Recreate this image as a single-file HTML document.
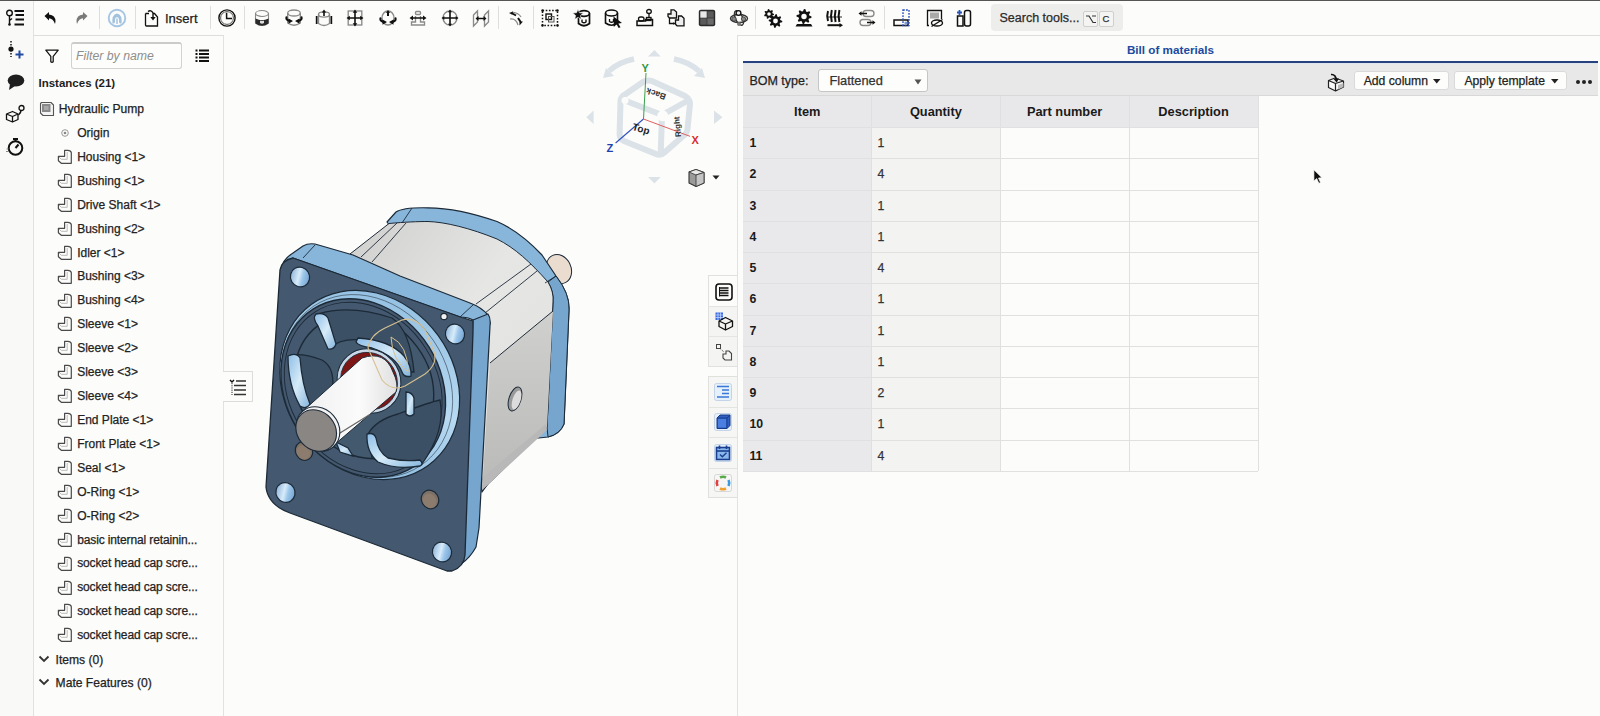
<!DOCTYPE html><html><head><meta charset="utf-8"><style>
*{box-sizing:border-box;margin:0;padding:0}
html,body{width:1600px;height:716px;overflow:hidden;background:#fcfcfa;font-family:"Liberation Sans",sans-serif;color:#222}
body{position:relative}
.a{position:absolute}
.t{position:absolute;white-space:nowrap}
.r{-webkit-text-stroke:0.25px currentColor}
svg{position:absolute;overflow:visible}
</style></head><body>
<div class="a" style="left:0;top:0;width:1600px;height:1px;background:#555553"></div>
<div class="a" style="left:0;top:1px;width:33px;height:715px;background:#f9f9f7"></div>
<div class="a" style="left:33px;top:1px;width:1px;height:715px;background:#e2e2e0"></div>
<div class="a" style="left:34px;top:35px;width:190px;height:1px;background:#dededc"></div>
<div class="a" style="left:737px;top:35px;width:863px;height:1px;background:#dededc"></div>
<div class="a" style="left:223px;top:36px;width:1px;height:680px;background:#e2e2e0"></div>
<div class="a" style="left:737px;top:36px;width:1px;height:680px;background:#e2e2e0"></div>
<div class="a" style="left:98.5px;top:6px;width:1px;height:23px;background:#dededc"></div>
<div class="a" style="left:134.5px;top:6px;width:1px;height:23px;background:#dededc"></div>
<div class="a" style="left:209.5px;top:6px;width:1px;height:23px;background:#dededc"></div>
<div class="a" style="left:243.5px;top:6px;width:1px;height:23px;background:#dededc"></div>
<div class="a" style="left:497.5px;top:6px;width:1px;height:23px;background:#dededc"></div>
<div class="a" style="left:532.5px;top:6px;width:1px;height:23px;background:#dededc"></div>
<div class="a" style="left:755.0px;top:6px;width:1px;height:23px;background:#dededc"></div>
<div class="a" style="left:883.5px;top:6px;width:1px;height:23px;background:#dededc"></div>
<div class="t r" style="left:165.00px;top:12.00px;font-size:13px;line-height:13px;color:#222;">Insert</div>
<div class="a" style="left:991px;top:4px;width:132px;height:27px;background:#ededeb;border-radius:4px"></div>
<div class="t r" style="left:999.50px;top:11.62px;font-size:12.5px;line-height:12.5px;color:#2a2a2a;">Search tools...</div>
<div class="a" style="left:1082.5px;top:10.5px;width:15px;height:16px;border:1px solid #cfcfcd;border-radius:2px;background:#f4f4f2"></div>
<div class="a" style="left:1098.5px;top:10.5px;width:15px;height:16px;border:1px solid #cfcfcd;border-radius:2px;background:#f4f4f2"></div>
<svg width="12" height="10" viewBox="0 0 12 10" style="left:1084.5px;top:13.5px"><path d="M1 2 L4 2 L8 8.5 L11 8.5 M7 2 L11 2" fill="none" stroke="#333" stroke-width="1.2"/></svg>
<div class="t r" style="left:1102.50px;top:14.26px;font-size:9.5px;line-height:9.5px;color:#333;">C</div>
<div class="a" style="left:70.5px;top:41.5px;width:111px;height:27px;border:1px solid #d2d2d0;border-top:2px solid #cbcbc9;border-radius:3px;background:#fdfdfb"></div>
<div class="t" style="left:76.00px;top:50.09px;font-size:12.3px;line-height:12.3px;font-weight:700;color:#8e8e8c;font-style:italic;font-weight:400;">Filter by name</div>
<div class="t" style="left:38.50px;top:77.57px;font-size:11.5px;line-height:11.5px;font-weight:700;color:#1e1e1e;">Instances (21)</div>
<div class="t r" style="left:58.70px;top:102.86px;font-size:12.1px;line-height:12.1px;color:#222;">Hydraulic Pump</div>
<div class="t r" style="left:77.20px;top:127.06px;font-size:12.1px;line-height:12.1px;color:#222;">Origin</div>
<svg width="16" height="16" style="left:57px;top:149.00px" viewBox="0 0 16 16"><path d="M1.4 7.3 L7.6 7.3 L7.6 1.4 L10.8 1.4 Q13.8 1.4 14.3 3.7 L14.3 14.3 L4.3 14.3 L1.4 11.7 Z" fill="none" stroke="#4a4a4a" stroke-width="1.2" stroke-linejoin="round"/><path d="M2 8 L4.3 10.3 L10.2 10.3 L10.2 3" fill="none" stroke="#aaa" stroke-width="0.8"/></svg>
<div class="t r" style="left:77.20px;top:150.84px;font-size:12.0px;line-height:12.0px;color:#222;">Housing &lt;1&gt;</div>
<svg width="16" height="16" style="left:57px;top:172.92px" viewBox="0 0 16 16"><path d="M1.4 7.3 L7.6 7.3 L7.6 1.4 L10.8 1.4 Q13.8 1.4 14.3 3.7 L14.3 14.3 L4.3 14.3 L1.4 11.7 Z" fill="none" stroke="#4a4a4a" stroke-width="1.2" stroke-linejoin="round"/><path d="M2 8 L4.3 10.3 L10.2 10.3 L10.2 3" fill="none" stroke="#aaa" stroke-width="0.8"/></svg>
<div class="t r" style="left:77.20px;top:174.76px;font-size:12.0px;line-height:12.0px;color:#222;">Bushing &lt;1&gt;</div>
<svg width="16" height="16" style="left:57px;top:196.84px" viewBox="0 0 16 16"><path d="M1.4 7.3 L7.6 7.3 L7.6 1.4 L10.8 1.4 Q13.8 1.4 14.3 3.7 L14.3 14.3 L4.3 14.3 L1.4 11.7 Z" fill="none" stroke="#4a4a4a" stroke-width="1.2" stroke-linejoin="round"/><path d="M2 8 L4.3 10.3 L10.2 10.3 L10.2 3" fill="none" stroke="#aaa" stroke-width="0.8"/></svg>
<div class="t r" style="left:77.20px;top:198.68px;font-size:12.0px;line-height:12.0px;color:#222;">Drive Shaft &lt;1&gt;</div>
<svg width="16" height="16" style="left:57px;top:220.76px" viewBox="0 0 16 16"><path d="M1.4 7.3 L7.6 7.3 L7.6 1.4 L10.8 1.4 Q13.8 1.4 14.3 3.7 L14.3 14.3 L4.3 14.3 L1.4 11.7 Z" fill="none" stroke="#4a4a4a" stroke-width="1.2" stroke-linejoin="round"/><path d="M2 8 L4.3 10.3 L10.2 10.3 L10.2 3" fill="none" stroke="#aaa" stroke-width="0.8"/></svg>
<div class="t r" style="left:77.20px;top:222.60px;font-size:12.0px;line-height:12.0px;color:#222;">Bushing &lt;2&gt;</div>
<svg width="16" height="16" style="left:57px;top:244.68px" viewBox="0 0 16 16"><path d="M1.4 7.3 L7.6 7.3 L7.6 1.4 L10.8 1.4 Q13.8 1.4 14.3 3.7 L14.3 14.3 L4.3 14.3 L1.4 11.7 Z" fill="none" stroke="#4a4a4a" stroke-width="1.2" stroke-linejoin="round"/><path d="M2 8 L4.3 10.3 L10.2 10.3 L10.2 3" fill="none" stroke="#aaa" stroke-width="0.8"/></svg>
<div class="t r" style="left:77.20px;top:246.52px;font-size:12.0px;line-height:12.0px;color:#222;">Idler &lt;1&gt;</div>
<svg width="16" height="16" style="left:57px;top:268.60px" viewBox="0 0 16 16"><path d="M1.4 7.3 L7.6 7.3 L7.6 1.4 L10.8 1.4 Q13.8 1.4 14.3 3.7 L14.3 14.3 L4.3 14.3 L1.4 11.7 Z" fill="none" stroke="#4a4a4a" stroke-width="1.2" stroke-linejoin="round"/><path d="M2 8 L4.3 10.3 L10.2 10.3 L10.2 3" fill="none" stroke="#aaa" stroke-width="0.8"/></svg>
<div class="t r" style="left:77.20px;top:270.44px;font-size:12.0px;line-height:12.0px;color:#222;">Bushing &lt;3&gt;</div>
<svg width="16" height="16" style="left:57px;top:292.52px" viewBox="0 0 16 16"><path d="M1.4 7.3 L7.6 7.3 L7.6 1.4 L10.8 1.4 Q13.8 1.4 14.3 3.7 L14.3 14.3 L4.3 14.3 L1.4 11.7 Z" fill="none" stroke="#4a4a4a" stroke-width="1.2" stroke-linejoin="round"/><path d="M2 8 L4.3 10.3 L10.2 10.3 L10.2 3" fill="none" stroke="#aaa" stroke-width="0.8"/></svg>
<div class="t r" style="left:77.20px;top:294.36px;font-size:12.0px;line-height:12.0px;color:#222;">Bushing &lt;4&gt;</div>
<svg width="16" height="16" style="left:57px;top:316.44px" viewBox="0 0 16 16"><path d="M1.4 7.3 L7.6 7.3 L7.6 1.4 L10.8 1.4 Q13.8 1.4 14.3 3.7 L14.3 14.3 L4.3 14.3 L1.4 11.7 Z" fill="none" stroke="#4a4a4a" stroke-width="1.2" stroke-linejoin="round"/><path d="M2 8 L4.3 10.3 L10.2 10.3 L10.2 3" fill="none" stroke="#aaa" stroke-width="0.8"/></svg>
<div class="t r" style="left:77.20px;top:318.28px;font-size:12.0px;line-height:12.0px;color:#222;">Sleeve &lt;1&gt;</div>
<svg width="16" height="16" style="left:57px;top:340.36px" viewBox="0 0 16 16"><path d="M1.4 7.3 L7.6 7.3 L7.6 1.4 L10.8 1.4 Q13.8 1.4 14.3 3.7 L14.3 14.3 L4.3 14.3 L1.4 11.7 Z" fill="none" stroke="#4a4a4a" stroke-width="1.2" stroke-linejoin="round"/><path d="M2 8 L4.3 10.3 L10.2 10.3 L10.2 3" fill="none" stroke="#aaa" stroke-width="0.8"/></svg>
<div class="t r" style="left:77.20px;top:342.20px;font-size:12.0px;line-height:12.0px;color:#222;">Sleeve &lt;2&gt;</div>
<svg width="16" height="16" style="left:57px;top:364.28px" viewBox="0 0 16 16"><path d="M1.4 7.3 L7.6 7.3 L7.6 1.4 L10.8 1.4 Q13.8 1.4 14.3 3.7 L14.3 14.3 L4.3 14.3 L1.4 11.7 Z" fill="none" stroke="#4a4a4a" stroke-width="1.2" stroke-linejoin="round"/><path d="M2 8 L4.3 10.3 L10.2 10.3 L10.2 3" fill="none" stroke="#aaa" stroke-width="0.8"/></svg>
<div class="t r" style="left:77.20px;top:366.12px;font-size:12.0px;line-height:12.0px;color:#222;">Sleeve &lt;3&gt;</div>
<svg width="16" height="16" style="left:57px;top:388.20px" viewBox="0 0 16 16"><path d="M1.4 7.3 L7.6 7.3 L7.6 1.4 L10.8 1.4 Q13.8 1.4 14.3 3.7 L14.3 14.3 L4.3 14.3 L1.4 11.7 Z" fill="none" stroke="#4a4a4a" stroke-width="1.2" stroke-linejoin="round"/><path d="M2 8 L4.3 10.3 L10.2 10.3 L10.2 3" fill="none" stroke="#aaa" stroke-width="0.8"/></svg>
<div class="t r" style="left:77.20px;top:390.04px;font-size:12.0px;line-height:12.0px;color:#222;">Sleeve &lt;4&gt;</div>
<svg width="16" height="16" style="left:57px;top:412.12px" viewBox="0 0 16 16"><path d="M1.4 7.3 L7.6 7.3 L7.6 1.4 L10.8 1.4 Q13.8 1.4 14.3 3.7 L14.3 14.3 L4.3 14.3 L1.4 11.7 Z" fill="none" stroke="#4a4a4a" stroke-width="1.2" stroke-linejoin="round"/><path d="M2 8 L4.3 10.3 L10.2 10.3 L10.2 3" fill="none" stroke="#aaa" stroke-width="0.8"/></svg>
<div class="t r" style="left:77.20px;top:413.96px;font-size:12.0px;line-height:12.0px;color:#222;">End Plate &lt;1&gt;</div>
<svg width="16" height="16" style="left:57px;top:436.04px" viewBox="0 0 16 16"><path d="M1.4 7.3 L7.6 7.3 L7.6 1.4 L10.8 1.4 Q13.8 1.4 14.3 3.7 L14.3 14.3 L4.3 14.3 L1.4 11.7 Z" fill="none" stroke="#4a4a4a" stroke-width="1.2" stroke-linejoin="round"/><path d="M2 8 L4.3 10.3 L10.2 10.3 L10.2 3" fill="none" stroke="#aaa" stroke-width="0.8"/></svg>
<div class="t r" style="left:77.20px;top:437.88px;font-size:12.0px;line-height:12.0px;color:#222;">Front Plate &lt;1&gt;</div>
<svg width="16" height="16" style="left:57px;top:459.96px" viewBox="0 0 16 16"><path d="M1.4 7.3 L7.6 7.3 L7.6 1.4 L10.8 1.4 Q13.8 1.4 14.3 3.7 L14.3 14.3 L4.3 14.3 L1.4 11.7 Z" fill="none" stroke="#4a4a4a" stroke-width="1.2" stroke-linejoin="round"/><path d="M2 8 L4.3 10.3 L10.2 10.3 L10.2 3" fill="none" stroke="#aaa" stroke-width="0.8"/></svg>
<div class="t r" style="left:77.20px;top:461.80px;font-size:12.0px;line-height:12.0px;color:#222;">Seal &lt;1&gt;</div>
<svg width="16" height="16" style="left:57px;top:483.88px" viewBox="0 0 16 16"><path d="M1.4 7.3 L7.6 7.3 L7.6 1.4 L10.8 1.4 Q13.8 1.4 14.3 3.7 L14.3 14.3 L4.3 14.3 L1.4 11.7 Z" fill="none" stroke="#4a4a4a" stroke-width="1.2" stroke-linejoin="round"/><path d="M2 8 L4.3 10.3 L10.2 10.3 L10.2 3" fill="none" stroke="#aaa" stroke-width="0.8"/></svg>
<div class="t r" style="left:77.20px;top:485.72px;font-size:12.0px;line-height:12.0px;color:#222;">O-Ring &lt;1&gt;</div>
<svg width="16" height="16" style="left:57px;top:507.80px" viewBox="0 0 16 16"><path d="M1.4 7.3 L7.6 7.3 L7.6 1.4 L10.8 1.4 Q13.8 1.4 14.3 3.7 L14.3 14.3 L4.3 14.3 L1.4 11.7 Z" fill="none" stroke="#4a4a4a" stroke-width="1.2" stroke-linejoin="round"/><path d="M2 8 L4.3 10.3 L10.2 10.3 L10.2 3" fill="none" stroke="#aaa" stroke-width="0.8"/></svg>
<div class="t r" style="left:77.20px;top:509.64px;font-size:12.0px;line-height:12.0px;color:#222;">O-Ring &lt;2&gt;</div>
<svg width="16" height="16" style="left:57px;top:531.72px" viewBox="0 0 16 16"><path d="M1.4 7.3 L7.6 7.3 L7.6 1.4 L10.8 1.4 Q13.8 1.4 14.3 3.7 L14.3 14.3 L4.3 14.3 L1.4 11.7 Z" fill="none" stroke="#4a4a4a" stroke-width="1.2" stroke-linejoin="round"/><path d="M2 8 L4.3 10.3 L10.2 10.3 L10.2 3" fill="none" stroke="#aaa" stroke-width="0.8"/></svg>
<div class="t r" style="left:77.20px;top:533.56px;font-size:12.0px;line-height:12.0px;color:#222;letter-spacing:-0.13px;">basic internal retainin...</div>
<svg width="16" height="16" style="left:57px;top:555.64px" viewBox="0 0 16 16"><path d="M1.4 7.3 L7.6 7.3 L7.6 1.4 L10.8 1.4 Q13.8 1.4 14.3 3.7 L14.3 14.3 L4.3 14.3 L1.4 11.7 Z" fill="none" stroke="#4a4a4a" stroke-width="1.2" stroke-linejoin="round"/><path d="M2 8 L4.3 10.3 L10.2 10.3 L10.2 3" fill="none" stroke="#aaa" stroke-width="0.8"/></svg>
<div class="t r" style="left:77.20px;top:557.48px;font-size:12.0px;line-height:12.0px;color:#222;letter-spacing:-0.13px;">socket head cap scre...</div>
<svg width="16" height="16" style="left:57px;top:579.56px" viewBox="0 0 16 16"><path d="M1.4 7.3 L7.6 7.3 L7.6 1.4 L10.8 1.4 Q13.8 1.4 14.3 3.7 L14.3 14.3 L4.3 14.3 L1.4 11.7 Z" fill="none" stroke="#4a4a4a" stroke-width="1.2" stroke-linejoin="round"/><path d="M2 8 L4.3 10.3 L10.2 10.3 L10.2 3" fill="none" stroke="#aaa" stroke-width="0.8"/></svg>
<div class="t r" style="left:77.20px;top:581.40px;font-size:12.0px;line-height:12.0px;color:#222;letter-spacing:-0.13px;">socket head cap scre...</div>
<svg width="16" height="16" style="left:57px;top:603.48px" viewBox="0 0 16 16"><path d="M1.4 7.3 L7.6 7.3 L7.6 1.4 L10.8 1.4 Q13.8 1.4 14.3 3.7 L14.3 14.3 L4.3 14.3 L1.4 11.7 Z" fill="none" stroke="#4a4a4a" stroke-width="1.2" stroke-linejoin="round"/><path d="M2 8 L4.3 10.3 L10.2 10.3 L10.2 3" fill="none" stroke="#aaa" stroke-width="0.8"/></svg>
<div class="t r" style="left:77.20px;top:605.32px;font-size:12.0px;line-height:12.0px;color:#222;letter-spacing:-0.13px;">socket head cap scre...</div>
<svg width="16" height="16" style="left:57px;top:627.40px" viewBox="0 0 16 16"><path d="M1.4 7.3 L7.6 7.3 L7.6 1.4 L10.8 1.4 Q13.8 1.4 14.3 3.7 L14.3 14.3 L4.3 14.3 L1.4 11.7 Z" fill="none" stroke="#4a4a4a" stroke-width="1.2" stroke-linejoin="round"/><path d="M2 8 L4.3 10.3 L10.2 10.3 L10.2 3" fill="none" stroke="#aaa" stroke-width="0.8"/></svg>
<div class="t r" style="left:77.20px;top:629.24px;font-size:12.0px;line-height:12.0px;color:#222;letter-spacing:-0.13px;">socket head cap scre...</div>
<div class="t r" style="left:55.60px;top:653.56px;font-size:12.1px;line-height:12.1px;color:#222;">Items (0)</div>
<div class="t r" style="left:55.60px;top:676.66px;font-size:12.1px;line-height:12.1px;color:#222;">Mate Features (0)</div>
<svg width="12" height="8" style="left:37.5px;top:655.3px" viewBox="0 0 12 8"><path d="M1.5 1.5 L6 6 L10.5 1.5" fill="none" stroke="#333" stroke-width="1.8"/></svg>
<svg width="12" height="8" style="left:37.5px;top:678.4px" viewBox="0 0 12 8"><path d="M1.5 1.5 L6 6 L10.5 1.5" fill="none" stroke="#333" stroke-width="1.8"/></svg>
<div class="t" style="left:1126.90px;top:43.90px;font-size:11.7px;line-height:11.7px;font-weight:700;color:#2049a0;">Bill of materials</div>
<div class="a" style="left:743px;top:61px;width:855px;height:2px;background:#26437f"></div>
<div class="a" style="left:743px;top:63px;width:855px;height:33px;background:#e8e8e9;border-top:1px solid #dfe5ef;border-bottom:1px solid #d8d8d8"></div>
<div class="t r" style="left:749.40px;top:75.02px;font-size:12.5px;line-height:12.5px;color:#222;">BOM type:</div>
<div class="a" style="left:817.5px;top:68.8px;width:110px;height:23px;border:1px solid #c6c6c6;border-radius:3px;background:#fdfdfb"></div>
<div class="t r" style="left:829.40px;top:74.76px;font-size:12.8px;line-height:12.8px;color:#333;">Flattened</div>
<svg width="8" height="6" style="left:914px;top:78.5px" viewBox="0 0 8 6"><path d="M0.5 0.5 L7.5 0.5 L4 5.5 Z" fill="#555"/></svg>
<div class="a" style="left:1354px;top:70.7px;width:95px;height:19.5px;border:1px solid #dadada;border-radius:3px;background:#fdfdfb"></div>
<div class="t r" style="left:1363.70px;top:74.67px;font-size:12.2px;line-height:12.2px;color:#222;">Add column</div>
<svg width="8" height="5" style="left:1433px;top:78.5px" viewBox="0 0 8 5"><path d="M0 0 L7.5 0 L3.75 4.5 Z" fill="#222"/></svg>
<div class="a" style="left:1454px;top:70.7px;width:113px;height:19.5px;border:1px solid #dadada;border-radius:3px;background:#fdfdfb"></div>
<div class="t r" style="left:1464.40px;top:74.67px;font-size:12.2px;line-height:12.2px;color:#222;">Apply template</div>
<svg width="8" height="5" style="left:1551px;top:78.5px" viewBox="0 0 8 5"><path d="M0 0 L7.5 0 L3.75 4.5 Z" fill="#222"/></svg>
<div class="a" style="left:1575.5px;top:80px;width:4px;height:4px;border-radius:2px;background:#222"></div>
<div class="a" style="left:1581.5px;top:80px;width:4px;height:4px;border-radius:2px;background:#222"></div>
<div class="a" style="left:1587.5px;top:80px;width:4px;height:4px;border-radius:2px;background:#222"></div>
<svg width="20" height="20" viewBox="0 0 20 20" style="left:1326px;top:72px"><path d="M2.5 8.5 L9 6 L17.5 9 L17.5 15 L9.5 19 L2.5 15.5 Z M2.5 8.5 L9.5 11.5 L17.5 9 M9.5 11.5 L9.5 19" fill="#fafafa" stroke="#222" stroke-width="1.2" stroke-linejoin="round"/><path d="M12 13 L17.5 11 L17.5 15 L12 17.5 Z" fill="#bbb"/><path d="M5 2.5 Q9.5 2 10.5 8" fill="none" stroke="#111" stroke-width="1.6"/><path d="M7.5 7 L10.7 10.5 L13 6.5 Z" fill="#111"/></svg>
<div class="a" style="left:743px;top:96.25px;width:515px;height:31.25px;background:#e8e8ea"></div>
<div class="a" style="left:743px;top:127.5px;width:128.5px;height:343.75px;background:#e9e9eb"></div>
<div class="a" style="left:871.5px;top:127.5px;width:128.7px;height:343.75px;background:#f3f3f2"></div>
<div class="a" style="left:1000.5px;top:127.5px;width:257.5px;height:343.75px;background:#fcfcfa"></div>
<div class="a" style="left:743px;top:127.00px;width:515px;height:1px;background:#e0e0e0"></div>
<div class="a" style="left:743px;top:158.25px;width:515px;height:1px;background:#e0e0e0"></div>
<div class="a" style="left:743px;top:189.50px;width:515px;height:1px;background:#e0e0e0"></div>
<div class="a" style="left:743px;top:220.75px;width:515px;height:1px;background:#e0e0e0"></div>
<div class="a" style="left:743px;top:252.00px;width:515px;height:1px;background:#e0e0e0"></div>
<div class="a" style="left:743px;top:283.25px;width:515px;height:1px;background:#e0e0e0"></div>
<div class="a" style="left:743px;top:314.50px;width:515px;height:1px;background:#e0e0e0"></div>
<div class="a" style="left:743px;top:345.75px;width:515px;height:1px;background:#e0e0e0"></div>
<div class="a" style="left:743px;top:377.00px;width:515px;height:1px;background:#e0e0e0"></div>
<div class="a" style="left:743px;top:408.25px;width:515px;height:1px;background:#e0e0e0"></div>
<div class="a" style="left:743px;top:439.50px;width:515px;height:1px;background:#e0e0e0"></div>
<div class="a" style="left:743px;top:470.75px;width:515px;height:1px;background:#e0e0e0"></div>
<div class="a" style="left:871.00px;top:96.25px;width:1px;height:375px;background:#e0e0e0"></div>
<div class="a" style="left:999.70px;top:96.25px;width:1px;height:375px;background:#e0e0e0"></div>
<div class="a" style="left:1128.50px;top:96.25px;width:1px;height:375px;background:#e0e0e0"></div>
<div class="a" style="left:1257.50px;top:96.25px;width:1px;height:375px;background:#e0e0e0"></div>
<div class="t" style="left:743px;width:128.5px;text-align:center;top:105.76px;font-size:12.8px;line-height:12.8px;font-weight:700;color:#1a1a1a">Item</div>
<div class="t" style="left:871.5px;width:128.70000000000005px;text-align:center;top:105.76px;font-size:12.8px;line-height:12.8px;font-weight:700;color:#1a1a1a">Quantity</div>
<div class="t" style="left:1000.2px;width:128.79999999999995px;text-align:center;top:105.76px;font-size:12.8px;line-height:12.8px;font-weight:700;color:#1a1a1a">Part number</div>
<div class="t" style="left:1129px;width:129px;text-align:center;top:105.76px;font-size:12.8px;line-height:12.8px;font-weight:700;color:#1a1a1a">Description</div>
<div class="t" style="left:749.40px;top:137.09px;font-size:12.3px;line-height:12.3px;font-weight:700;color:#1a1a1a;">1</div>
<div class="t r" style="left:877.50px;top:137.09px;font-size:12.3px;line-height:12.3px;color:#333;">1</div>
<div class="t" style="left:749.40px;top:168.34px;font-size:12.3px;line-height:12.3px;font-weight:700;color:#1a1a1a;">2</div>
<div class="t r" style="left:877.50px;top:168.34px;font-size:12.3px;line-height:12.3px;color:#333;">4</div>
<div class="t" style="left:749.40px;top:199.59px;font-size:12.3px;line-height:12.3px;font-weight:700;color:#1a1a1a;">3</div>
<div class="t r" style="left:877.50px;top:199.59px;font-size:12.3px;line-height:12.3px;color:#333;">1</div>
<div class="t" style="left:749.40px;top:230.84px;font-size:12.3px;line-height:12.3px;font-weight:700;color:#1a1a1a;">4</div>
<div class="t r" style="left:877.50px;top:230.84px;font-size:12.3px;line-height:12.3px;color:#333;">1</div>
<div class="t" style="left:749.40px;top:262.09px;font-size:12.3px;line-height:12.3px;font-weight:700;color:#1a1a1a;">5</div>
<div class="t r" style="left:877.50px;top:262.09px;font-size:12.3px;line-height:12.3px;color:#333;">4</div>
<div class="t" style="left:749.40px;top:293.34px;font-size:12.3px;line-height:12.3px;font-weight:700;color:#1a1a1a;">6</div>
<div class="t r" style="left:877.50px;top:293.34px;font-size:12.3px;line-height:12.3px;color:#333;">1</div>
<div class="t" style="left:749.40px;top:324.59px;font-size:12.3px;line-height:12.3px;font-weight:700;color:#1a1a1a;">7</div>
<div class="t r" style="left:877.50px;top:324.59px;font-size:12.3px;line-height:12.3px;color:#333;">1</div>
<div class="t" style="left:749.40px;top:355.84px;font-size:12.3px;line-height:12.3px;font-weight:700;color:#1a1a1a;">8</div>
<div class="t r" style="left:877.50px;top:355.84px;font-size:12.3px;line-height:12.3px;color:#333;">1</div>
<div class="t" style="left:749.40px;top:387.09px;font-size:12.3px;line-height:12.3px;font-weight:700;color:#1a1a1a;">9</div>
<div class="t r" style="left:877.50px;top:387.09px;font-size:12.3px;line-height:12.3px;color:#333;">2</div>
<div class="t" style="left:749.40px;top:418.34px;font-size:12.3px;line-height:12.3px;font-weight:700;color:#1a1a1a;">10</div>
<div class="t r" style="left:877.50px;top:418.34px;font-size:12.3px;line-height:12.3px;color:#333;">1</div>
<div class="t" style="left:749.40px;top:449.59px;font-size:12.3px;line-height:12.3px;font-weight:700;color:#1a1a1a;">11</div>
<div class="t r" style="left:877.50px;top:449.59px;font-size:12.3px;line-height:12.3px;color:#333;">4</div>
<svg width="20" height="20" viewBox="0 0 20 20" style="left:40.00px;top:7.50px"><path d="M4.5 8 L9 4 L9 6.5 Q15.5 7 15.5 13.5 L15 16 Q13 10.5 9 10.3 L9 12.5 Z" fill="#111"/></svg>
<svg width="20" height="20" viewBox="0 0 20 20" style="left:72.00px;top:7.50px"><path d="M15.5 8 L11 4 L11 6.5 Q4.5 7 4.5 13.5 L5 16 Q7 10.5 11 10.3 L11 12.5 Z" fill="#7a7a7a"/></svg>
<svg width="20" height="20" viewBox="0 0 20 20" style="left:107.00px;top:7.50px"><circle cx="10" cy="10" r="8.3" fill="none" stroke="#a6c6e4" stroke-width="1.9"/><path d="M5.5 15.5 Q4.5 6.5 10 5.5 Q15.5 6.5 14.5 15.5 Q12.5 16 12 14 Q12.5 9.5 10 9.3 Q7.5 9.5 8 14 Q7.5 16 5.5 15.5 Z" fill="#a3c2e0"/><path d="M9 10.5 L11 10.5 L11 16 L9 16 Z" fill="#b8d2ea"/></svg>
<svg width="20" height="20" viewBox="0 0 20 20" style="left:142.40px;top:7.50px"><path d="M3.5 5.5 L7 5.5 M3.5 5.5 L3.5 17 Q3.5 18 4.5 18 L15.5 18 L15.5 9 L12.5 5.5 L11 5.5" fill="none" stroke="#111" stroke-width="1.3"/><path d="M6 3.5 Q9 1.5 11 5 L11 10" fill="none" stroke="#111" stroke-width="1.4"/><path d="M8.3 9 L13.7 9 L11 12.5 Z" fill="#111"/></svg>
<svg width="20" height="20" viewBox="0 0 20 20" style="left:217.40px;top:7.50px"><circle cx="10" cy="10" r="8.1" fill="none" stroke="#111" stroke-width="1.4"/><circle cx="10" cy="10" r="6.4" fill="none" stroke="#444" stroke-width="0.9"/><path d="M9.6 4.8 L9.6 10.6 L15 10.6" fill="none" stroke="#111" stroke-width="1.5"/></svg>
<svg width="20" height="20" viewBox="0 0 20 20" style="left:251.50px;top:7.50px"><ellipse cx="10" cy="5.5" rx="6.5" ry="3" fill="none" stroke="#888" stroke-width="1.1"/><path d="M3.5 5.5 L3.5 15 Q10 20 16.5 15 L16.5 5.5" fill="none" stroke="#888" stroke-width="1.1"/><path d="M3.5 10.5 Q10 14 16.5 10.5 L16.5 15.5 Q10 20 3.5 15.5 Z" fill="#2a2a2a"/><path d="M8 12.5 L8 15 Q10 16.5 12 15 L12 12.5 Q10 13.5 8 12.5 Z" fill="#ddd"/></svg>
<svg width="20" height="20" viewBox="0 0 20 20" style="left:283.90px;top:7.50px"><ellipse cx="10" cy="5" rx="6.3" ry="3" fill="none" stroke="#8a8a8a" stroke-width="1.35"/><path d="M3.7 5 L3.7 15 Q10 19.5 16.3 15 L16.3 5" fill="none" stroke="#8a8a8a" stroke-width="1.35"/><path d="M5.5 13 Q1 11.5 2.8 8.5 M14.5 13 Q19 11.5 17.2 8.5" fill="none" stroke="#111" stroke-width="2"/><path d="M4.5 10.5 L9 13 L4.5 15.8 Z M15.5 10.5 L11 13 L15.5 15.8 Z" fill="#111"/></svg>
<svg width="20" height="20" viewBox="0 0 20 20" style="left:314.40px;top:7.50px"><ellipse cx="10" cy="6.5" rx="5.5" ry="2.6" fill="none" stroke="#8a8a8a" stroke-width="1.35"/><path d="M4.5 6.5 L4.5 15.5 Q10 19.5 15.5 15.5 L15.5 6.5" fill="none" stroke="#8a8a8a" stroke-width="1.35"/><path d="M10 1.5 L12.2 4.5 L10.8 4.5 L10.8 8 L9.2 8 L9.2 4.5 L7.8 4.5 Z" fill="#111"/><rect x="1.8" y="8" width="1.7" height="8" fill="#111"/><rect x="16.5" y="8" width="1.7" height="8" fill="#111"/></svg>
<svg width="20" height="20" viewBox="0 0 20 20" style="left:345.40px;top:7.50px"><rect x="3.2" y="3" width="13.6" height="14" fill="none" stroke="#8a8a8a" stroke-width="1.35"/><path d="M10 1.5 L12.3 4.8 L10.8 4.8 L10.8 9.2 L15.2 9.2 L15.2 7.7 L18.5 10 L15.2 12.3 L15.2 10.8 L10.8 10.8 L10.8 15.2 L12.3 15.2 L10 18.5 L7.7 15.2 L9.2 15.2 L9.2 10.8 L4.8 10.8 L4.8 12.3 L1.5 10 L4.8 7.7 L4.8 9.2 L9.2 9.2 L9.2 4.8 L7.7 4.8 Z" fill="#111"/></svg>
<svg width="20" height="20" viewBox="0 0 20 20" style="left:377.50px;top:7.50px"><ellipse cx="10" cy="10" rx="6" ry="7" fill="none" stroke="#8a8a8a" stroke-width="1.35"/><path d="M10 2 L12 5 L8 5 Z" fill="#111"/><path d="M10 5 L10 8" stroke="#111" stroke-width="2"/><path d="M5.5 14 Q1 12.5 2.8 9.5 M14.5 14 Q19 12.5 17.2 9.5" fill="none" stroke="#111" stroke-width="2"/><path d="M4.5 11.5 L9 14 L4.5 16.8 Z M15.5 11.5 L11 14 L15.5 16.8 Z" fill="#111"/></svg>
<svg width="20" height="20" viewBox="0 0 20 20" style="left:408.00px;top:7.50px"><rect x="7.5" y="3.5" width="5" height="3" rx="1" fill="none" stroke="#8a8a8a" stroke-width="1.35"/><path d="M7.5 8 L7.5 14 L3.5 14 L3.5 17 L16.5 17 L16.5 14 L12.5 14 L12.5 8" fill="none" stroke="#8a8a8a" stroke-width="1.35"/><path d="M1.5 10 L5 7.5 L5 9.2 L15 9.2 L15 7.5 L18.5 10 L15 12.5 L15 10.8 L5 10.8 L5 12.5 Z" fill="#111"/></svg>
<svg width="20" height="20" viewBox="0 0 20 20" style="left:439.70px;top:7.50px"><circle cx="10" cy="10" r="7" fill="none" stroke="#8a8a8a" stroke-width="1.35"/><path d="M10 1.5 L12 4.3 L10.8 4.3 L10.8 9.2 L15.7 9.2 L15.7 8 L18.5 10 L15.7 12 L15.7 10.8 L10.8 10.8 L10.8 15.7 L12 15.7 L10 18.5 L8 15.7 L9.2 15.7 L9.2 10.8 L4.3 10.8 L4.3 12 L1.5 10 L4.3 8 L4.3 9.2 L9.2 9.2 L9.2 4.3 L8 4.3 Z" fill="#111"/></svg>
<svg width="20" height="20" viewBox="0 0 20 20" style="left:471.00px;top:7.50px"><path d="M2.5 7 L6.5 3 L6.5 14 L2.5 18 Z M13.5 7 L17.5 3 L17.5 14 L13.5 18 Z" fill="none" stroke="#8a8a8a" stroke-width="1.35"/><path d="M4.5 10.5 L7.5 8 L7.5 9.8 L12.5 9.8 L12.5 8 L15.5 10.5 L12.5 13 L12.5 11.2 L7.5 11.2 L7.5 13 Z" fill="#111"/></svg>
<svg width="20" height="20" viewBox="0 0 20 20" style="left:506.00px;top:7.50px"><path d="M6 4 Q13 5 15 9 M4 11 Q10 10 12 17" fill="none" stroke="#8a8a8a" stroke-width="1.2"/><path d="M3 5 L7 3.5 L6.3 6.8 Z" fill="#111"/><path d="M5.5 5 L10 7.5" stroke="#111" stroke-width="2"/><path d="M12 10 L15 14.5" stroke="#111" stroke-width="2"/><path d="M13.5 17.5 L17 13.5 L13.5 14 Z" fill="#111"/></svg>
<svg width="20" height="20" viewBox="0 0 20 20" style="left:540.20px;top:7.50px"><path d="M2.5 2.5 L17.5 2.5 L17.5 17.5 L2.5 17.5 Z" fill="none" stroke="#111" stroke-width="1.5" stroke-dasharray="1.6 1.6"/><circle cx="2.5" cy="2.5" r="1.2" fill="#111"/><circle cx="17.5" cy="2.5" r="1.2" fill="#111"/><circle cx="2.5" cy="17.5" r="1.2" fill="#111"/><circle cx="17.5" cy="17.5" r="1.2" fill="#111"/><rect x="6" y="6" width="5.5" height="5.5" fill="none" stroke="#111" stroke-width="1.4"/><rect x="8.5" y="8.5" width="5.5" height="5.5" fill="none" stroke="#555" stroke-width="1"/></svg>
<svg width="20" height="20" viewBox="0 0 20 20" style="left:572.00px;top:7.50px"><ellipse cx="12" cy="5.5" rx="5.5" ry="2.8" fill="none" stroke="#111" stroke-width="1.7"/><path d="M6.5 5.5 L6.5 15.5 Q12 20 17.5 15.5 L17.5 5.5" fill="none" stroke="#111" stroke-width="1.7"/><path d="M10 11.5 L10 14 Q12 15.5 14 14 L14 11.5" fill="none" stroke="#111" stroke-width="1.4"/><path d="M6.00 1.20 L7.47 4.78 L11.33 5.07 L8.38 7.57 L9.29 11.33 L6.00 9.30 L2.71 11.33 L3.62 7.57 L0.67 5.07 L4.53 4.78 Z" fill="#111" stroke="#fcfcfa" stroke-width="0.6"/></svg>
<svg width="20" height="20" viewBox="0 0 20 20" style="left:602.50px;top:7.50px"><ellipse cx="8.5" cy="5" rx="6" ry="3" fill="none" stroke="#111" stroke-width="1.6"/><path d="M2.5 5 L2.5 15 Q8.5 19.5 14.5 15 L14.5 5" fill="none" stroke="#111" stroke-width="1.6"/><path d="M6.5 11 L6.5 13.5 Q8.5 15 10.5 13.5 L10.5 11" fill="none" stroke="#111" stroke-width="1.3"/><path d="M10.5 8.5 L19 15 L15.3 15.6 L17.5 19.3 L15.6 20 L13.6 16.3 L10.8 19 Z" fill="#111"/></svg>
<svg width="20" height="20" viewBox="0 0 20 20" style="left:635.00px;top:7.50px"><path d="M2 13 L2 17.5 L17.5 17.5 L17.5 11.5 L10.5 11.5 L10.5 13 Z" fill="none" stroke="#111" stroke-width="1.5"/><rect x="3.5" y="9" width="5.5" height="4" rx="2" fill="none" stroke="#111" stroke-width="1.3"/><rect x="11.5" y="9.5" width="4.5" height="3" fill="none" stroke="#111" stroke-width="1.3"/><ellipse cx="14" cy="3.5" rx="2.3" ry="2" fill="none" stroke="#111" stroke-width="1.3"/><path d="M14 5.5 L14 9.5" stroke="#111" stroke-width="1.3"/></svg>
<svg width="20" height="20" viewBox="0 0 20 20" style="left:666.00px;top:7.50px"><path d="M2 6 L5 6 L5 1.8 L8 1.8 L10.5 4 L10.5 10 L3.5 10 L2 8.5 Z" fill="#eee" stroke="#111" stroke-width="1.3"/><path d="M9.5 12 L12.5 12 L12.5 8 L15.5 8 L18 10.2 L18 17.8 L11 17.8 L9.5 16.3 Z" fill="#eee" stroke="#111" stroke-width="1.3"/><path d="M3.5 10 L3.5 15.5 L8 15.5" fill="none" stroke="#111" stroke-width="1.3"/><path d="M7.5 14 L9.5 15.5 L7.5 17 Z" fill="#111"/></svg>
<svg width="20" height="20" viewBox="0 0 20 20" style="left:696.50px;top:7.50px"><rect x="1.8" y="1.8" width="16.4" height="16.4" rx="2" fill="#2a2a2a"/><rect x="3.3" y="3.3" width="6.4" height="6.4" fill="#e8e8e8"/><rect x="10.3" y="3.3" width="6.4" height="6.4" fill="#5a5a5a"/><rect x="3.3" y="10.3" width="6.4" height="6.4" fill="#5a5a5a"/><rect x="10.3" y="10.3" width="6.4" height="6.4" fill="#6a6a6a"/></svg>
<svg width="20" height="20" viewBox="0 0 20 20" style="left:728.50px;top:7.50px"><ellipse cx="10" cy="10.5" rx="8.5" ry="4" fill="none" stroke="#333" stroke-width="1.4"/><ellipse cx="10" cy="10" rx="3.5" ry="7.8" transform="rotate(-25 10 10)" fill="none" stroke="#333" stroke-width="1.4"/><circle cx="9.5" cy="5" r="2.4" fill="#eee" stroke="#111" stroke-width="1.3"/><circle cx="5" cy="11" r="2.2" fill="#888" stroke="#333" stroke-width="0.8"/><circle cx="14.5" cy="11" r="2.2" fill="#888" stroke="#333" stroke-width="0.8"/><circle cx="10" cy="16" r="2" fill="#777"/></svg>
<svg width="20" height="20" viewBox="0 0 20 20" style="left:762.50px;top:7.50px"><path d="M11.00 6.00 L10.87 7.11 L9.24 7.56 L8.81 8.24 L9.12 9.91 L8.17 10.50 L6.80 9.51 L6.00 9.60 L4.89 10.87 L3.83 10.50 L3.76 8.81 L3.19 8.24 L1.50 8.17 L1.13 7.11 L2.40 6.00 L2.49 5.20 L1.50 3.83 L2.09 2.88 L3.76 3.19 L4.44 2.76 L4.89 1.13 L6.00 1.00 L6.80 2.49 L7.56 2.76 L9.12 2.09 L9.91 2.88 L9.24 4.44 L9.51 5.20 Z" fill="#111"/><circle cx="6" cy="6" r="1.80" fill="#fcfcfa"/><path d="M19.30 13.00 L19.17 14.33 L17.02 14.87 L16.57 15.72 L17.31 17.81 L16.28 18.65 L14.37 17.52 L13.46 17.80 L12.50 19.80 L11.17 19.67 L10.63 17.52 L9.78 17.07 L7.69 17.81 L6.85 16.78 L7.98 14.87 L7.70 13.96 L5.70 13.00 L5.83 11.67 L7.98 11.13 L8.43 10.28 L7.69 8.19 L8.72 7.35 L10.63 8.48 L11.54 8.20 L12.50 6.20 L13.83 6.33 L14.37 8.48 L15.22 8.93 L17.31 8.19 L18.15 9.22 L17.02 11.13 L17.30 12.04 Z" fill="#111"/><circle cx="12.5" cy="13" r="2.45" fill="#fcfcfa"/></svg>
<svg width="20" height="20" viewBox="0 0 20 20" style="left:794.30px;top:7.50px"><path d="M17.50 8.50 L17.36 9.96 L14.99 10.57 L14.49 11.50 L15.30 13.80 L14.17 14.74 L12.07 13.49 L11.05 13.80 L10.00 16.00 L8.54 15.86 L7.93 13.49 L7.00 12.99 L4.70 13.80 L3.76 12.67 L5.01 10.57 L4.70 9.55 L2.50 8.50 L2.64 7.04 L5.01 6.43 L5.51 5.50 L4.70 3.20 L5.83 2.26 L7.93 3.51 L8.95 3.20 L10.00 1.00 L11.46 1.14 L12.07 3.51 L13.00 4.01 L15.30 3.20 L16.24 4.33 L14.99 6.43 L15.30 7.45 Z" fill="#111"/><circle cx="10" cy="8.5" r="2.70" fill="#fcfcfa"/><path d="M1.5 18.5 L18.5 18.5 L17 16 L3 16 Z" fill="#111"/></svg>
<svg width="20" height="20" viewBox="0 0 20 20" style="left:825.30px;top:7.50px"><path d="M3 3 Q1.5 7.5 3 13 M6.8 2 Q5.3 7.5 6.8 14 M10.6 2 Q9.1 7.5 10.6 14 M14.4 2 Q12.9 7.5 14.4 14" fill="none" stroke="#111" stroke-width="2"/><path d="M2 9 L17 9" stroke="#111" stroke-width="0.9"/><path d="M2.5 17.2 L15 17.2" stroke="#111" stroke-width="2"/><path d="M14.5 15 L18 17.2 L14.5 19.4 Z" fill="#111"/></svg>
<svg width="20" height="20" viewBox="0 0 20 20" style="left:857.30px;top:7.50px"><rect x="6" y="2.5" width="11" height="6" rx="3" fill="none" stroke="#8a8a8a" stroke-width="1.35"/><rect x="3" y="11.5" width="11" height="6" rx="3" fill="none" stroke="#8a8a8a" stroke-width="1.35"/><path d="M1.5 5.5 L4.5 3.3 L4.5 4.8 L10 4.8 L10 6.2 L4.5 6.2 L4.5 7.7 Z" fill="#111"/><path d="M18.5 14.5 L15.5 12.3 L15.5 13.8 L10 13.8 L10 15.2 L15.5 15.2 L15.5 16.7 Z" fill="#111"/></svg>
<svg width="20" height="20" viewBox="0 0 20 20" style="left:891.70px;top:7.50px"><rect x="2" y="12" width="14" height="5.5" fill="none" stroke="#111" stroke-width="1.5"/><rect x="11" y="2" width="6" height="15.5" fill="none" stroke="#2c4fc0" stroke-width="1.4" stroke-dasharray="1.8 1.2"/><circle cx="14" cy="15" r="1.6" fill="#7a9ad8"/></svg>
<svg width="20" height="20" viewBox="0 0 20 20" style="left:924.50px;top:7.50px"><path d="M4 17.5 L2.5 17.5 L2.5 2.5 L16.5 2.5 L16.5 11" fill="none" stroke="#111" stroke-width="1.3"/><rect x="5" y="4.5" width="9" height="6" fill="#aaa"/><ellipse cx="12" cy="15" rx="5.5" ry="3" fill="none" stroke="#111" stroke-width="1.4"/><path d="M6.5 18.5 L17.5 11.5" stroke="#111" stroke-width="1.4"/></svg>
<svg width="20" height="20" viewBox="0 0 20 20" style="left:954.20px;top:7.50px"><rect x="3.5" y="8" width="5.5" height="10" fill="none" stroke="#111" stroke-width="1.5"/><rect x="10.5" y="2.5" width="6" height="15.5" rx="2" fill="none" stroke="#111" stroke-width="1.5"/><path d="M5.5 2 L5.5 7 M3 4.5 L8 4.5" stroke="#2a55b8" stroke-width="1.8"/></svg>
<svg width="20" height="20" viewBox="0 0 20 20" style="left:5px;top:8px"><circle cx="4.5" cy="5" r="2.8" fill="none" stroke="#111" stroke-width="1.4"/><path d="M4.5 7.8 L4.5 16.5 M4.5 12.5 L7 10.5" fill="none" stroke="#111" stroke-width="1.4"/><circle cx="4.5" cy="16.5" r="1.3" fill="#111"/><path d="M9.5 3 L19 3 M10.5 7 L19 7 M10.5 11.5 L19 11.5 M9.5 16.5 L19 16.5" stroke="#111" stroke-width="2"/></svg>
<svg width="20" height="20" viewBox="0 0 20 20" style="left:5px;top:40px"><path d="M6 1 L6 17" stroke="#111" stroke-width="1.5" stroke-dasharray="1.5 1.5"/><circle cx="6" cy="9" r="2.6" fill="#111"/><path d="M14.5 10.5 L14.5 18.5 M10.5 14.5 L18.5 14.5" stroke="#1f4aa0" stroke-width="2"/></svg>
<svg width="20" height="20" viewBox="0 0 20 20" style="left:5.5px;top:72px"><ellipse cx="10" cy="8.5" rx="8.3" ry="6" fill="#1e1e1e"/><path d="M4 12 L3 18 L9 14 Z" fill="#1e1e1e"/></svg>
<svg width="20" height="20" viewBox="0 0 20 20" style="left:4.5px;top:104px"><path d="M1.5 10 L7.5 7.5 L13 10 L13 15.5 L7.5 18 L1.5 15.5 Z M1.5 10 L7.5 12.5 L13 10 M7.5 12.5 L7.5 18" fill="none" stroke="#111" stroke-width="1.3" stroke-linejoin="round"/><path d="M13.5 11 Q16 9 16 6" fill="none" stroke="#111" stroke-width="1.5"/><circle cx="16.5" cy="4" r="2.5" fill="none" stroke="#111" stroke-width="1.3"/></svg>
<svg width="20" height="20" viewBox="0 0 20 20" style="left:5px;top:137px"><circle cx="10.5" cy="11" r="6.8" fill="none" stroke="#111" stroke-width="2"/><path d="M8 2 L13 2 M10.5 2 L10.5 4" stroke="#111" stroke-width="2"/><path d="M10.5 11 L13.5 7.5" stroke="#111" stroke-width="2"/><path d="M1.5 12 L3.5 12 M1 14.5 L3.5 14.5" stroke="#888" stroke-width="1"/></svg>
<svg width="160" height="160" viewBox="0 0 160 160" style="left:575px;top:40px">
<g transform="translate(-575 -40)">
<path d="M648 56.6 L654.4 50 L660.7 56.6 Z" fill="#dbe2e8"/>
<path d="M593.6 110.6 L586.3 117.3 L593.6 124 Z" fill="#dbe2e8"/>
<path d="M714 110.6 L722.5 117.3 L714 124 Z" fill="#dbe2e8"/>
<path d="M648 177 L654.4 183.5 L660.7 177 Z" fill="#dbe2e8"/>
<path d="M634 59 Q619 62 609 71" fill="none" stroke="#dbe2e8" stroke-width="5.5"/>
<path d="M603 78 L606 68 L614 76 Z" fill="#dbe2e8"/>
<path d="M674 59 Q689 62 699 71" fill="none" stroke="#dbe2e8" stroke-width="5.5"/>
<path d="M705 78 L702 68 L694 76 Z" fill="#dbe2e8"/>
<path d="M643 82 Q648 79.5 653 81.5 L685 96 Q690 99 690 104 L687.5 129 Q687 134 682 137 L665 152 Q660.7 156 656 154 L624 141 Q619.6 139 619.6 134 L620.5 101 Q621 96.5 625 94.5 Z" fill="none" stroke="#dbe2e8" stroke-width="6" stroke-linejoin="round"/>
<path d="M621 99 L662 115 L689 100 M662 115 L660.7 154" fill="none" stroke="#dbe2e8" stroke-width="6"/>
<circle cx="625" cy="100.5" r="3.5" fill="#fcfcfa"/><circle cx="662.7" cy="115.8" r="5.5" fill="#fcfcfa"/>
<path d="M643.5 119 L646 73" stroke="#3aa050" stroke-width="1"/>
<path d="M643.5 119 L690 136.3" stroke="#e06060" stroke-width="1"/>
<path d="M643.5 119 L615.6 143" stroke="#3050c0" stroke-width="1.1"/>
<text x="641.5" y="72" font-size="11" fill="#2e9a44" font-family="Liberation Sans" font-weight="700">Y</text>
<text x="691.5" y="143.5" font-size="11" fill="#d83030" font-family="Liberation Sans" font-weight="700">X</text>
<text x="606.5" y="152" font-size="11" fill="#2040b0" font-family="Liberation Sans" font-weight="700">Z</text>
<text x="632.5" y="132" font-size="10" fill="#222" font-family="Liberation Sans" font-weight="700" transform="rotate(16 640 128)">Top</text>
<text x="646" y="97" font-size="8.5" fill="#333" font-family="Liberation Sans" font-weight="700" transform="rotate(200 656 94)">Back</text>
<text x="666" y="129" font-size="8" fill="#333" font-family="Liberation Sans" font-weight="700" transform="rotate(-95 677 126)">Right</text>
<path d="M689 172 L696 169.5 L704 172.5 L704 183 L696 186.5 L689 183 Z" fill="#9a9a9a" stroke="#333" stroke-width="1.1" stroke-linejoin="round"/>
<path d="M689 172 L696 175 L704 172.5 L696 169.5 Z" fill="#e8e8e8" stroke="#333" stroke-width="0.8"/>
<path d="M696 175 L696 186.5 L704 183 L704 172.5 Z" fill="#c4c4c4" stroke="#333" stroke-width="0.8"/>
<path d="M712.5 175.5 L719.5 175.5 L716 179.5 Z" fill="#222"/>
</g></svg>
<div class="a" style="left:223px;top:371px;width:30px;height:31px;border:1px solid #dcdcda;border-left:none;background:#fcfcfa"></div>
<svg width="20" height="20" viewBox="0 0 20 20" style="left:228px;top:377px"><path d="M2 3 L4 5 L6 3" fill="none" stroke="#111" stroke-width="1.4"/><path d="M4 6 L4 18" stroke="#333" stroke-width="1" stroke-dasharray="1.2 1"/><path d="M8 4 L18 4 M6 8.5 L18 8.5 M6 13 L18 13 M6 17.5 L18 17.5" stroke="#333" stroke-width="1.4"/></svg>
<div class="a" style="left:708px;top:275px;width:29px;height:91.5px;border:1px solid #e0e0de;border-right:none;background:#f4f4f2"></div>
<div class="a" style="left:709px;top:276px;width:28px;height:30px;background:#fcfcfa"></div>
<div class="a" style="left:709px;top:306px;width:28px;height:1px;background:#e4e4e2"></div>
<div class="a" style="left:709px;top:336px;width:28px;height:1px;background:#e4e4e2"></div>
<div class="a" style="left:708px;top:376px;width:29px;height:122px;border:1px solid #e0e0de;border-right:none;background:#f6f6f4"></div>
<div class="a" style="left:709px;top:406.5px;width:28px;height:1px;background:#e4e4e2"></div>
<div class="a" style="left:709px;top:437px;width:28px;height:1px;background:#e4e4e2"></div>
<div class="a" style="left:709px;top:467.5px;width:28px;height:1px;background:#e4e4e2"></div>
<svg width="20" height="20" viewBox="0 0 20 20" style="left:713.5px;top:281.5px"><rect x="2" y="2" width="16" height="16" rx="3" fill="none" stroke="#111" stroke-width="1.6"/><path d="M5.5 6 L14.5 6 M5.5 8.5 L14.5 8.5 M5.5 11 L14.5 11 M5.5 13.5 L14.5 13.5" stroke="#111" stroke-width="1.3"/><path d="M5.5 5 L5.5 14.5" stroke="#111" stroke-width="1"/></svg>
<svg width="20" height="20" viewBox="0 0 20 20" style="left:713.5px;top:311px"><rect x="1.5" y="1.5" width="7.5" height="7.5" fill="#3a6ae0"/><path d="M1.5 4 L9 4 M1.5 6.5 L9 6.5 M4 1.5 L4 9 M6.5 1.5 L6.5 9" stroke="#cfe0ff" stroke-width="0.7"/><path d="M5 10 L11.5 6.5 L18.5 10 L18.5 15.5 L11.5 19 L5 15.5 Z M5 10 L11.5 13 L18.5 10 M11.5 13 L11.5 19" fill="none" stroke="#111" stroke-width="1.3" stroke-linejoin="round"/></svg>
<svg width="20" height="20" viewBox="0 0 20 20" style="left:713.5px;top:341.5px"><rect x="2.5" y="2.5" width="4" height="4" fill="none" stroke="#444" stroke-width="1"/><path d="M6.5 7 L10 10" stroke="#444" stroke-width="1" stroke-dasharray="1 1"/><path d="M9 12 L12 12 L12 9 L15 9 L17.5 11.5 L17.5 18 L11 18 L9 16 Z" fill="none" stroke="#444" stroke-width="1.1"/></svg>
<svg width="20" height="20" viewBox="0 0 20 20" style="left:713px;top:381.5px"><rect x="1.5" y="1.5" width="17" height="17" rx="2" fill="#e6f0fb" stroke="#b8cce4" stroke-width="0.8"/><path d="M4 4.5 L16 4.5 M9 8 L16 8 M9 11.5 L16 11.5 M4 15 L16 15" stroke="#3a78d8" stroke-width="1.6"/></svg>
<svg width="20" height="20" viewBox="0 0 20 20" style="left:713px;top:412px"><rect x="1.5" y="1.5" width="17" height="17" rx="2" fill="#e6f0fb" stroke="#b8cce4" stroke-width="0.8"/><path d="M4 6 L7 3 L17 3 L17 13.5 L14 16.5 L4 16.5 Z" fill="#2f5fc0" stroke="#173a88" stroke-width="1"/><path d="M4 6 L14 6 L14 16.5 M14 6 L17 3" fill="none" stroke="#173a88" stroke-width="0.9"/><rect x="5" y="7" width="8" height="8.5" fill="#4a7ee0"/></svg>
<svg width="20" height="20" viewBox="0 0 20 20" style="left:713px;top:442.5px"><rect x="1.5" y="1.5" width="17" height="17" rx="2" fill="#e6f0fb" stroke="#b8cce4" stroke-width="0.8"/><rect x="3.5" y="4.5" width="13" height="12" fill="#8ab8ea" stroke="#1a3f90" stroke-width="1.6"/><path d="M3.5 8 L16.5 8" stroke="#1a3f90" stroke-width="1.6"/><path d="M6.5 2.5 L6.5 6 M13.5 2.5 L13.5 6" stroke="#1a3f90" stroke-width="1.6"/><path d="M7 11.5 L9.3 13.8 L13.5 9.8" fill="none" stroke="#1a3f90" stroke-width="1.4"/></svg>
<svg width="20" height="20" viewBox="0 0 20 20" style="left:713px;top:473px"><rect x="1.5" y="1.5" width="17" height="17" rx="2" fill="#f6f6f6" stroke="#cfcfcf" stroke-width="0.8"/><path d="M7 4.5 Q10 3 13 4.5" fill="none" stroke="#5aaa4a" stroke-width="2.6"/><path d="M15.5 7 Q17 10 15.5 13" fill="none" stroke="#3a9ae0" stroke-width="2.6"/><path d="M13 15.5 Q10 17 7 15.5" fill="none" stroke="#f0a030" stroke-width="2.6"/><path d="M4.5 13 Q3 10 4.5 7" fill="none" stroke="#e04040" stroke-width="2.6"/></svg>
<svg width="12" height="17" viewBox="0 0 14 20" style="left:1313px;top:169.2px"><path d="M1 1 L1 14 L4.3 11.2 L6.8 16.8 L8.8 15.9 L6.4 10.6 L10.5 10.3 Z" fill="#111" stroke="#fcfcfa" stroke-width="0.8"/></svg>
<svg width="16" height="16" viewBox="0 0 16 16" style="left:43.5px;top:47.5px"><path d="M1.8 2.2 L14.2 2.2 L9.2 8.3 L9.2 13.8 Q8 15 6.8 13.8 L6.8 8.3 Z" fill="none" stroke="#111" stroke-width="1.25" stroke-linejoin="round"/></svg>
<svg width="16" height="16" viewBox="0 0 16 16" style="left:193.5px;top:47.5px"><path d="M1.5 2.5 L3.5 2.5 M1.5 6 L3.5 6 M1.5 9.5 L3.5 9.5 M1.5 13 L3.5 13" stroke="#111" stroke-width="1.8"/><path d="M5 2.5 L15 2.5 M5 6 L15 6 M5 9.5 L15 9.5 M5 13 L15 13" stroke="#111" stroke-width="1.8"/></svg>
<svg width="16" height="16" viewBox="0 0 16 16" style="left:38.5px;top:100.5px"><path d="M2.5 1.5 L12 1.5 L14.5 4 L14.5 14.5 L4 14.5 L1.5 12 L1.5 2.5 Z" fill="#f4f4f4" stroke="#555" stroke-width="1.1" stroke-linejoin="round"/><rect x="3" y="3" width="8.5" height="8" fill="#8a8a8a"/><rect x="5" y="5" width="4.5" height="4" fill="#aaa"/></svg>
<svg width="10" height="10" viewBox="0 0 10 10" style="left:60px;top:128px"><circle cx="5" cy="5" r="3.3" fill="none" stroke="#999" stroke-width="1"/><circle cx="5" cy="5" r="1.3" fill="#888"/></svg>
<svg width="1600" height="716" viewBox="0 0 1600 716" style="left:0;top:0">
<defs>
<linearGradient id="hg" x1="0" y1="0" x2="1" y2="1">
<stop offset="0" stop-color="#cfcfcd"/><stop offset="0.45" stop-color="#e6e6e4"/><stop offset="1" stop-color="#e0e0de"/></linearGradient>
<linearGradient id="hs" x1="0" y1="0" x2="0" y2="1">
<stop offset="0" stop-color="#d0d0ce"/><stop offset="1" stop-color="#b9b9b7"/></linearGradient>
<linearGradient id="sh" x1="0" y1="0" x2="1" y2="0">
<stop offset="0" stop-color="#f0f0f0"/><stop offset="0.6" stop-color="#fbfbfb"/><stop offset="1" stop-color="#e0e0e0"/></linearGradient>
<linearGradient id="hole" x1="0" y1="0" x2="1" y2="1">
<stop offset="0" stop-color="#6f9ccc"/><stop offset="0.45" stop-color="#d8ecfa"/><stop offset="0.6" stop-color="#9cc6ea"/><stop offset="1" stop-color="#5f8fc4"/></linearGradient>
<linearGradient id="wall" x1="0" y1="0" x2="1" y2="1"><stop offset="0" stop-color="#8dbde6"/><stop offset="0.5" stop-color="#d6ebf8"/><stop offset="1" stop-color="#84b4dc"/></linearGradient>
<linearGradient id="rim" x1="0" y1="0" x2="1" y2="1"><stop offset="0" stop-color="#8ab8dc"/><stop offset="0.55" stop-color="#b8daf2"/><stop offset="1" stop-color="#7fb0d8"/></linearGradient>
</defs>
<ellipse cx="559" cy="269" rx="12" ry="15" transform="rotate(-25 559 269)" fill="#eadccf" stroke="#1c2a38" stroke-width="1"/>
<path d="M387 222 L396 212 C402 208 415 207.5 428 207.8 C445 208 470 212 497 221.5 C512 228 527 239 542 255 L556 276 Q570 294 569 310 L564 424 Q560 434 548 437 L520 440 L482 492 L470 330 Z" fill="#88b6da" stroke="#1c2a38" stroke-width="1.2" stroke-linejoin="round"/>
<path d="M548 282 L556 276 Q570 294 569 310 L564 424 Q560 434 548 437 L547 427 L553 302 Q554 292 548 282 Z" fill="#76a5cd" stroke="#1c2a38" stroke-width="1"/>
<path d="M350 254 L389 223.5 C405 222 418 221.5 428 221.5 C445 222 470 228 497 239 C515 248 530 262 548 282 Q554 292 553 302 L547 427 Q544 432 538 436 L482 490 L470 330 Z" fill="url(#hg)" stroke="#1c2a38" stroke-width="1"/>
<path d="M490 363 L553 311 L547 427 Q544 432 538 436 L482 490 Z" fill="url(#hs)" stroke="none"/>
<path d="M490 363 L553 311" stroke="#1c2a38" stroke-width="1" fill="none"/>
<path d="M482 478 L546 424 L547 430 L482 490 Z" fill="#b8b8b8"/>
<path d="M361 257 L397 223 M372 262 L406 223" stroke="#1c2a38" stroke-width="0.9" fill="none"/>
<path d="M476 304 L531 264 M485 313 L537 271" stroke="#1c2a38" stroke-width="0.9" fill="none"/>
<path d="M402 223 L412 208 M545 283 L556 276" stroke="#1c2a38" stroke-width="0.9" fill="none"/>
<ellipse cx="515" cy="399" rx="6" ry="12.5" transform="rotate(18 515 399)" fill="#9a9a9a" stroke="#1c2a38" stroke-width="1"/>
<ellipse cx="516.5" cy="400" rx="4" ry="10" transform="rotate(18 516.5 400)" fill="#dcdcdc"/>
<path d="M281 269 Q283 259 293 253 L303 246 Q308 243 315 244 L353 255 L400 276 L470 303 Q481 307 488 315 L490 324 L473 320 Q468 317 460 317 L293 258 Z" fill="#88b6da" stroke="#1c2a38" stroke-width="1.2" stroke-linejoin="round"/>
<path d="M473 320 L488 314 Q491 318 490 326 L479 528 L476 547 Q470 558 461 564 L459 566 Z" fill="#76a5cd" stroke="#1c2a38" stroke-width="1.2" stroke-linejoin="round"/>
<path d="M303 258 L315 245 M460 317 L473 305" stroke="#1c2a38" stroke-width="0.9"/>
<path d="M293 258 L462 317.5 L473 321 L473 332 L465 555 Q464 567 452 571 L447 571 L290 513 Q268 505 266 487 L280 270 Q282 260 293 258 Z" fill="#44596f" stroke="#1c2a38" stroke-width="1.3" stroke-linejoin="round"/>
<ellipse cx="369.7" cy="385" rx="99.5" ry="84.5" transform="rotate(54 369.7 385)" fill="url(#rim)" stroke="#1c2a38" stroke-width="1.2"/>
<ellipse cx="367" cy="386" rx="96" ry="80.5" transform="rotate(56 367 386)" fill="none" stroke="#1c2a38" stroke-width="0.7" opacity="0.7"/>
<ellipse cx="363.2" cy="388" rx="93.5" ry="77.5" transform="rotate(57.8 363.2 388)" fill="#44596f" stroke="#1c2a38" stroke-width="1.4"/>
<ellipse cx="363.2" cy="388" rx="90" ry="74" transform="rotate(57.8 363.2 388)" fill="none" stroke="#1c2a38" stroke-width="0.9"/>
<ellipse cx="364" cy="386" rx="76" ry="66" transform="rotate(53.3 364 386)" fill="#43596e" stroke="#1c2a38" stroke-width="1.4"/>
<path d="M318 314 Q350 304 392 318 Q410 330 414 372 L404 372 Q396 350 362 340 Q340 338 330 348 Z" fill="#3c5065" stroke="#1c2a38" stroke-width="1.3"/>
<path d="M289 356 Q300 352 322 360 Q336 368 332 392 Q326 405 309 406 Q294 385 289 356 Z" fill="#3c5065" stroke="#1c2a38" stroke-width="1.3"/>
<path d="M368 434 Q376 420 398 414 Q430 402 440 400 Q446 430 422 464 Q395 468 372 458 Z" fill="#3c5065" stroke="#1c2a38" stroke-width="1.3"/>
<path d="M316 314 Q324 312 328 318 L336 344 Q334 350 328 349 L318 326 Q312 318 316 314 Z" fill="url(#wall)" stroke="#1c2a38" stroke-width="1.3"/>
<path d="M358 338 Q390 340 404 356 Q412 366 411 376 Q404 378 402 372 Q396 356 372 348 Q358 346 356 342 Z" fill="url(#wall)" stroke="#1c2a38" stroke-width="1.3"/>
<path d="M288 356 Q296 352 300 358 Q302 385 310 404 Q306 410 300 406 Q288 385 288 356 Z" fill="url(#wall)" stroke="#1c2a38" stroke-width="1.3"/>
<path d="M367 434 Q374 432 376 438 Q378 452 388 458 Q404 462 420 460 Q424 464 420 466 Q396 470 378 462 Q366 452 367 434 Z" fill="url(#wall)" stroke="#1c2a38" stroke-width="1.3"/>
<path d="M406 392 Q412 392 414 398 L414 414 Q410 418 406 414 Z" fill="url(#wall)" stroke="#1c2a38" stroke-width="1.3"/>
<path d="M336 442 L348 448 L353 456 L340 452 Z" fill="url(#wall)" stroke="#1c2a38" stroke-width="1.3"/>
<ellipse cx="369" cy="381" rx="31" ry="33" transform="rotate(-41 369 381)" fill="#c8d8e8" stroke="#1c2a38" stroke-width="1"/>
<ellipse cx="369" cy="381" rx="27.5" ry="29.5" transform="rotate(-41 369 381)" fill="#7e1616" stroke="#1c2a38" stroke-width="0.8"/>
<ellipse cx="304" cy="451" rx="8.5" ry="9.5" transform="rotate(-30 304 451)" fill="#7d7066" stroke="#1c2a38" stroke-width="1.2"/>
<ellipse cx="303" cy="452" rx="6.5" ry="7.5" transform="rotate(-30 304 451)" fill="#8c7c6e"/>
<ellipse cx="430" cy="499.5" rx="8.5" ry="9.5" transform="rotate(-30 430 499.5)" fill="#7d7066" stroke="#1c2a38" stroke-width="1.2"/>
<ellipse cx="429" cy="500.5" rx="6.5" ry="7.5" transform="rotate(-30 430 499.5)" fill="#8c7c6e"/>
<path d="M303 411 L362 358 Q385 350 393 372 Q399 384 396 392 L334 445 Z" fill="url(#sh)" stroke="#1c2a38" stroke-width="1"/>
<path d="M337.6 434.5 L369.8 414.5" stroke="#666" stroke-width="1.3"/>
<ellipse cx="318" cy="429" rx="20.5" ry="23.5" transform="rotate(-41 318 429)" fill="#f2f2f2" stroke="#1c2a38" stroke-width="1.1"/>
<ellipse cx="316.2" cy="430.5" rx="19" ry="22" transform="rotate(-41 316.2 430.5)" fill="#8a8684" stroke="#1c2a38" stroke-width="1.1"/>
<ellipse cx="300" cy="277" rx="9.5" ry="10" transform="rotate(-30 300 277)" fill="url(#hole)" stroke="#1c2a38" stroke-width="1.2"/>
<ellipse cx="455" cy="334" rx="9.5" ry="10" transform="rotate(-30 455 334)" fill="url(#hole)" stroke="#1c2a38" stroke-width="1.2"/>
<ellipse cx="285.5" cy="492.5" rx="9.5" ry="10" transform="rotate(-30 285.5 492.5)" fill="url(#hole)" stroke="#1c2a38" stroke-width="1.2"/>
<ellipse cx="442" cy="552" rx="9.5" ry="10" transform="rotate(-30 442 552)" fill="url(#hole)" stroke="#1c2a38" stroke-width="1.2"/>
<circle cx="444" cy="316.5" r="3.2" fill="#f0f0f0" stroke="#1c2a38" stroke-width="1.2"/>
<path d="M368 348 Q370 335 385 328 L402 320 Q415 316 425 330 L434 352 Q438 364 425 374 L405 386 Q392 392 382 380 Z" fill="none" stroke="#d8c090" stroke-width="1.1"/>
<path d="M391 337 Q408 345 408 372 Q392 360 391 337 Z" fill="none" stroke="#d8c090" stroke-width="1"/>
</svg>
</body></html>
